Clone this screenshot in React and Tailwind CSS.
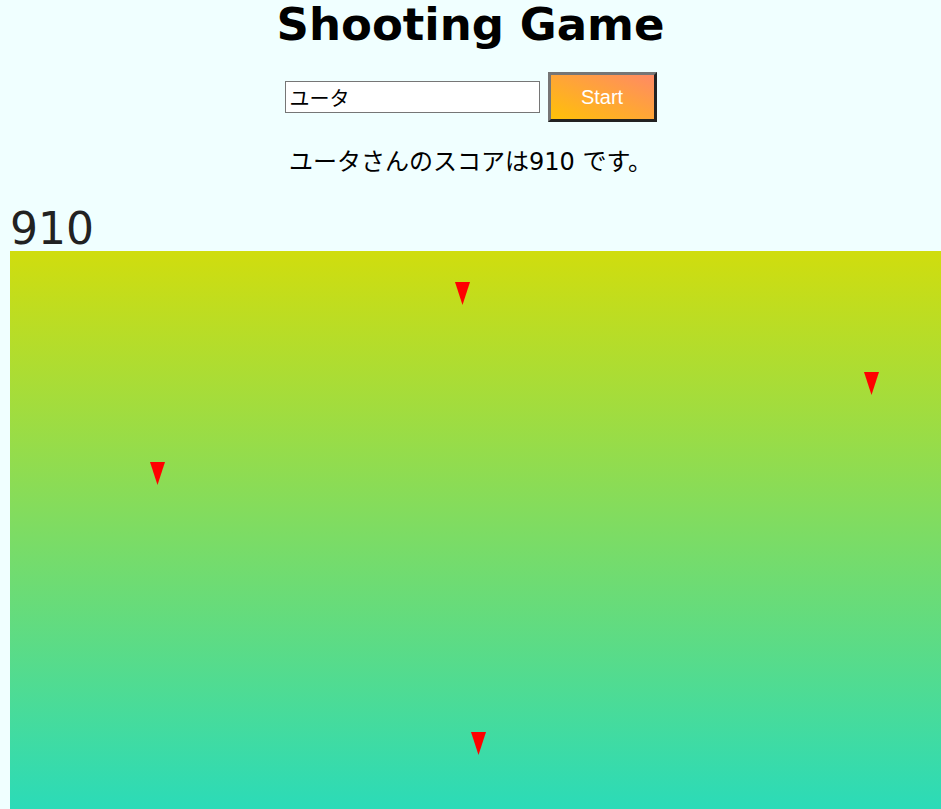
import React, { useState } from 'react'

const enemies = [
  { x: 445, y: 31 },
  { x: 854, y: 121 },
  { x: 140, y: 211 },
  { x: 461, y: 481 },
]

const Enemy = ({ x, y }) => (
  <svg
    className="absolute"
    style={{ left: x, top: y }}
    width="15"
    height="23"
    viewBox="0 0 15 23"
  >
    <polygon points="0,0 15,0 7.5,23" fill="#ff0000" />
  </svg>
)

export default function App() {
  const [name, setName] = useState('ユータ')
  const score = 910

  return (
    <div
      className="min-h-screen bg-[#f0ffff] text-black overflow-hidden"
      style={{ fontFamily: '"DejaVu Sans", "Noto Sans CJK JP", sans-serif' }}
    >
      <h1 className="text-center text-[45px] font-bold leading-[48px] pt-[1px]">
        Shooting Game
      </h1>

      {/* Controls */}
      <div className="flex items-center justify-center gap-2 mt-[23px]">
        <input
          value={name}
          onChange={(e) => setName(e.target.value)}
          className="w-[255px] h-[32px] bg-white border border-[#767676] px-1 text-[20px] leading-none outline-none"
          style={{ fontFamily: '"Noto Sans CJK JP", sans-serif' }}
        />
        <button
          className="w-[109px] h-[50px] border-[3px] border-t-[#767676] border-l-[#767676] border-b-[#222] border-r-[#222] bg-[linear-gradient(to_top_right,#ffc107,#ff8a65)] text-white text-[20px]"
          style={{ fontFamily: '"Liberation Sans", Arial, sans-serif' }}
        >
          Start
        </button>
      </div>

      <p className="text-center text-[24px] leading-[30px] mt-[25px]">
        {name}さんのスコアは{score} です。
      </p>

      <div className="ml-[10px] mt-[29px] text-[44px] leading-[45px] text-[#222]">
        {score}
      </div>

      {/* Game area */}
      <div className="relative ml-[10px] h-[558px] bg-[linear-gradient(to_bottom,#d0dd0e,#2bdbb8)]">
        {enemies.map((e, i) => (
          <Enemy key={i} x={e.x} y={e.y} />
        ))}
      </div>
    </div>
  )
}
